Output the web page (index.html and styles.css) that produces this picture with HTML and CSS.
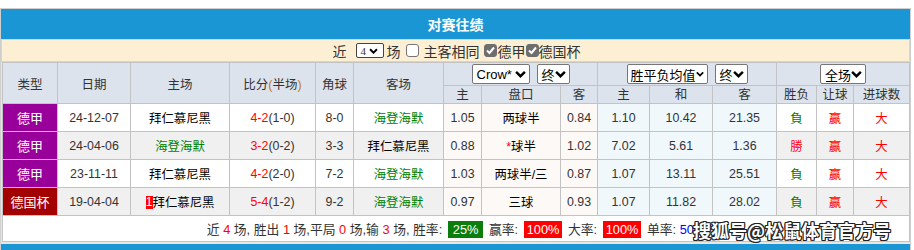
FILE: index.html
```html
<!DOCTYPE html>
<html lang="zh">
<head>
<meta charset="utf-8">
<link rel="stylesheet" href="styles.css">
</head>
<body>
<div class="wrap">
  <div class="title">对赛往绩</div>
  <div class="filter">
    <span class="f-near">近</span>
    <span class="mini-sel">4<svg width="9" height="6" viewBox="0 0 10 7"><path d="M1 1.5 L5 5.5 L9 1.5" fill="none" stroke="#000" stroke-width="2.2"/></svg></span>
    <span class="f-chang">场</span>
    <span class="cb"></span><span class="f-same">主客相同</span>
    <span class="cb on"><svg width="11" height="11" viewBox="0 0 11 11"><path d="M2 5.5 L4.5 8 L9 2.5" fill="none" stroke="#fff" stroke-width="2"/></svg></span><span class="f-lg">德甲</span><span class="cb on"><svg width="11" height="11" viewBox="0 0 11 11"><path d="M2 5.5 L4.5 8 L9 2.5" fill="none" stroke="#fff" stroke-width="2"/></svg></span><span>德国杯</span>
  </div>
  <table class="grid">
    <colgroup>
      <col class="w55"><col class="w73"><col class="w99"><col class="w86"><col class="w38"><col class="w90">
      <col class="w38"><col class="w79"><col class="w37"><col class="w52"><col class="w63"><col class="w64">
      <col class="w40"><col class="w37"><col class="w56">
    </colgroup>
    <thead>
      <tr class="h1">
        <th rowspan="2">类型</th>
        <th rowspan="2">日期</th>
        <th rowspan="2">主场</th>
        <th rowspan="2">比分<span class="paren">(</span>半场<span class="paren">)</span></th>
        <th rowspan="2">角球</th>
        <th rowspan="2">客场</th>
        <th colspan="3"><div class="sels"><span class="sel w-crow">Crow*<svg width="11" height="8" viewBox="0 0 10 7"><path d="M1 1.5 L5 5.5 L9 1.5" fill="none" stroke="#000" stroke-width="2.2"/></svg></span><span class="sel w-end">终<svg width="11" height="8" viewBox="0 0 10 7"><path d="M1 1.5 L5 5.5 L9 1.5" fill="none" stroke="#000" stroke-width="2.2"/></svg></span></div></th>
        <th colspan="3"><div class="sels"><span class="sel w-avg">胜平负均值<svg width="11" height="8" viewBox="0 0 10 7"><path d="M1 1.5 L5 5.5 L9 1.5" fill="none" stroke="#000" stroke-width="2.2"/></svg></span><span class="sel w-end">终<svg width="11" height="8" viewBox="0 0 10 7"><path d="M1 1.5 L5 5.5 L9 1.5" fill="none" stroke="#000" stroke-width="2.2"/></svg></span></div></th>
        <th colspan="3"><div class="sels"><span class="sel w-all">全场<svg width="11" height="8" viewBox="0 0 10 7"><path d="M1 1.5 L5 5.5 L9 1.5" fill="none" stroke="#000" stroke-width="2.2"/></svg></span></div></th>
      </tr>
      <tr class="h2">
        <th>主</th><th>盘口</th><th>客</th><th>主</th><th>和</th><th>客</th><th>胜负</th><th>让球</th><th>进球数</th>
      </tr>
    </thead>
    <tbody>
      <tr class="row">
        <td class="lg bund">德甲</td><td>24-12-07</td><td class="blk">拜仁慕尼黑</td>
        <td><span class="red">4-2</span>(1-0)</td><td>8-0</td><td class="grn">海登海默</td>
        <td class="pk">1.05</td><td class="pk blk">两球半</td><td class="pk">0.84</td>
        <td class="eu">1.10</td><td class="eu">10.42</td><td class="eu">21.35</td>
        <td class="grn">負</td><td class="red">赢</td><td class="red">大</td>
      </tr>
      <tr class="row alt">
        <td class="lg bund">德甲</td><td>24-04-06</td><td class="grn">海登海默</td>
        <td><span class="red">3-2</span>(0-2)</td><td>3-3</td><td class="blk">拜仁慕尼黑</td>
        <td class="pk">0.88</td><td class="pk blk"><span class="red">*</span>球半</td><td class="pk">1.02</td>
        <td class="eu">7.02</td><td class="eu">5.61</td><td class="eu">1.36</td>
        <td class="red">勝</td><td class="red">赢</td><td class="red">大</td>
      </tr>
      <tr class="row">
        <td class="lg bund">德甲</td><td>23-11-11</td><td class="blk">拜仁慕尼黑</td>
        <td><span class="red">4-2</span>(2-0)</td><td>7-2</td><td class="grn">海登海默</td>
        <td class="pk">1.03</td><td class="pk blk">两球半/三</td><td class="pk">0.87</td>
        <td class="eu">1.07</td><td class="eu">13.11</td><td class="eu">25.51</td>
        <td class="grn">負</td><td class="red">赢</td><td class="red">大</td>
      </tr>
      <tr class="row alt">
        <td class="lg cup">德国杯</td><td>19-04-04</td><td class="blk"><span class="card">1</span>拜仁慕尼黑</td>
        <td><span class="red">5-4</span>(1-2)</td><td>9-2</td><td class="grn">海登海默</td>
        <td class="pk">0.97</td><td class="pk blk">三球</td><td class="pk">0.93</td>
        <td class="eu">1.07</td><td class="eu">11.82</td><td class="eu">28.02</td>
        <td class="grn">負</td><td class="red">赢</td><td class="red">大</td>
      </tr>
      <tr class="sum">
        <td colspan="15">近 <span class="red">4</span> 场, 胜出 <span class="red">1</span> 场,平局 <span class="red">0</span> 场,输 <span class="red">3</span> 场, 胜率: <span class="box g">25%</span> 赢率: <span class="box r">100%</span> 大率: <span class="box r">100%</span> 单率: <span class="blue">50%</span></td>
      </tr>
    </tbody>
  </table>
  <div class="next"></div>
  <div class="mark">搜狐号@松鼠体育官方号</div>
</div>
</body>
</html>
```

FILE: styles.css
```css
html, body {
  margin: 0;
  padding: 0;
  background: #fff;
}
body {
  font-family: "Liberation Sans", "Noto Sans CJK SC", sans-serif;
  color: #333;
}
.wrap {
  position: relative;
  margin-top: 8px;
  width: 909px;
  border: 1px solid #cfcfcf;
  border-bottom: none;
  background: #ebe7df;
  height: 241px;
  overflow: hidden;
}
.title {
  height: 30px;
  line-height: 30px;
  background: #1b96d5;
  color: #fff;
  font-weight: bold;
  font-size: 14px;
  text-align: center;
  font-family: "Noto Sans CJK SC", sans-serif;
}
.filter {
  height: 21px;
  border: 1px solid #ead4a6;
  background: #fcefd4;
  display: flex;
  align-items: center;
  justify-content: center;
  font-size: 14px;
  color: #333;
  font-family: "Noto Sans CJK SC", sans-serif;
  padding-left: 2px;
}
.f-near { margin-right: 9px; }
.f-chang { margin: 0 5px 0 3px; }
.f-same { margin: 0 4px 0 5px; }
.f-lg { margin: 0 0 0 1px; }
.mini-sel {
  display: inline-flex;
  align-items: center;
  gap: 3px;
  border: 1px solid #444;
  border-radius: 2px;
  background: #fff;
  font-family: "Liberation Serif", serif;
  font-size: 11px;
  padding-left: 4px;
  box-sizing: border-box;
  width: 28px;
  height: 15px;
}
.cb {
  display: inline-flex;
  align-items: center;
  justify-content: center;
  width: 13px;
  height: 13px;
  border: 1px solid #767676;
  border-radius: 3px;
  background: #fff;
  box-sizing: border-box;
}
.cb.on {
  background: #6e6e6e;
  border-color: #6e6e6e;
}
.grid {
  border-collapse: collapse;
  table-layout: fixed;
  width: 908px;
  margin-left: 1px;
  font-size: 12px;
  background: #fff;
}
.w55 { width: 55px; } .w73 { width: 73px; } .w99 { width: 99px; } .w86 { width: 86px; }
.w38 { width: 38px; } .w90 { width: 90px; } .w79 { width: 79px; } .w37 { width: 37px; }
.w52 { width: 52px; } .w63 { width: 63px; } .w64 { width: 64px; } .w40 { width: 40px; }
.w56 { width: 56px; }
.grid th, .grid td {
  border: 1px solid #c3c3c3;
  padding: 0;
  text-align: center;
  vertical-align: middle;
  white-space: nowrap;
  overflow: hidden;
}
.grid th {
  background: #dce3ec;
  font-weight: normal;
  color: #333;
  font-size: 12.5px;
}
.paren { color: #c07a20; }
.h1 { height: 23px; }
.h2 { height: 18px; }
.h2 th { line-height: 16px; }
.sels {
  display: flex;
  justify-content: center;
  align-items: center;
  gap: 7px;
}
.sel {
  display: inline-flex;
  align-items: center;
  justify-content: space-between;
  height: 20px;
  box-sizing: border-box;
  border: 1px solid #767676;
  border-radius: 2px;
  background: #fff;
  font-size: 13px;
  color: #000;
  padding: 0 3px 0 4px;
}
.w-crow { width: 58px; }
.w-end { width: 33px; }
.w-avg { width: 81px; padding-left: 3px; }
.w-all { width: 46px; }
.row { height: 28px; }
.row td { font-size: 12.4px; color: #333; }
.row.alt td { background: #f0f0f0; }
.row td.pk { background: #fdf9f6; }
.row td.eu { background: #f0f8fc; }
.row td.lg { color: #fff; font-size: 13px; }
.row td.bund { background: #990099; }
.row td.cup { background: #a30000; }
.blk { color: #000 !important; }
.grn { color: #008000 !important; }
.red { color: #f00 !important; }
.card {
  display: inline-block;
  background: #f00;
  color: #fff;
  font-size: 12px;
  line-height: 13px;
  width: 7px;
  text-align: center;
  vertical-align: 1px;
}
.sum { height: 26px; }
.sum td {
  font-size: 12.8px;
  color: #333;
  background: #fff;
}
.box {
  display: inline-block;
  color: #fff;
  padding: 0 5px;
  line-height: 17px;
  margin: 0 2px;
}
.box.g { background: #0a7d0a; }
.box.r { background: #f00; padding: 0 3px; }
.blue { color: #00f; }
.next {
  margin-top: 2px;
  height: 10px;
  background: #1b96d5;
}
.mark {
  position: absolute;
  left: 692px;
  top: 208px;
  font-family: "Noto Sans CJK SC", sans-serif;
  font-size: 18px;
  font-weight: bold;
  color: #fff;
  text-shadow: 1px 1px 0 #222, -1px -1px 0 #222, 1px -1px 0 #222, -1px 1px 0 #222, 0 1px 0 #222, 1px 0 0 #222, 0 -1px 0 #222, -1px 0 0 #222;
}
```
